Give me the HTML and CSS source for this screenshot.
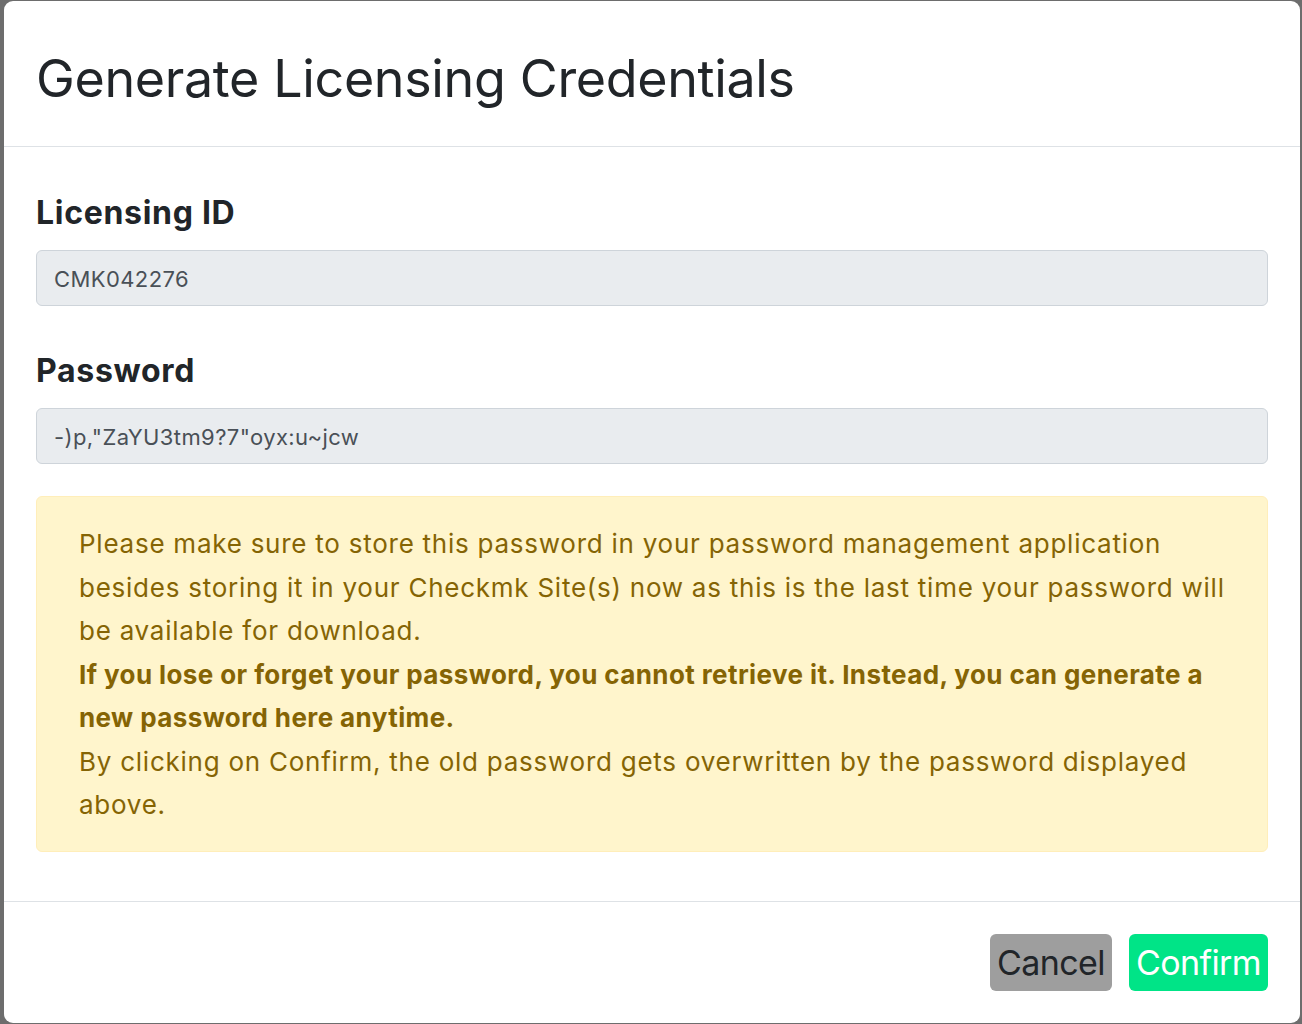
FILE: index.html
```html
<!DOCTYPE html>
<html lang="en">
<head>
<meta charset="utf-8">
<title>Generate Licensing Credentials</title>
<link rel="stylesheet" href="styles.css">
</head>
<body>
<div class="modal">
  <div class="modal-header">
    <h4 class="modal-title">Generate Licensing Credentials</h4>
  </div>
  <div class="modal-body">
    <div class="field first">
      <label class="field-label">Licensing ID</label>
      <input class="field-input" type="text" value="CMK042276" readonly>
    </div>
    <div class="field">
      <label class="field-label">Password</label>
      <input class="field-input" type="text" value="-)p,&quot;ZaYU3tm9?7&quot;oyx:u~jcw" readonly>
    </div>
    <div class="alert">
      Please make sure to store this password in your password management application<br>
      besides storing it in your Checkmk Site(s) now as this is the last time your password will<br>
      be available for download.<br>
      <strong>If you lose or forget your password, you cannot retrieve it. Instead, you can generate a<br>
      new password here anytime.</strong><br>
      By clicking on Confirm, the old password gets overwritten by the password displayed<br>
      above.
    </div>
  </div>
  <div class="modal-footer">
    <button class="btn btn-cancel" type="button">Cancel</button>
    <button class="btn btn-confirm" type="button">Confirm</button>
  </div>
</div>
</body>
</html>
```

FILE: styles.css
```css
html, body {
  margin: 0;
  padding: 0;
}
body {
  background: #6d6d6d;
  width: 1302px;
  height: 1024px;
  overflow: hidden;
  font-family: Inter, Roboto, "Liberation Sans", sans-serif;
  color: #212529;
}
.modal {
  margin: 1px 2px 0 4px;
  height: 1022px;
  background: #ffffff;
  border-radius: 9px;
  display: flex;
  flex-direction: column;
  box-sizing: border-box;
}
.modal-header {
  padding: 42px 32px 32px 32px;
  border-bottom: 1px solid #dee2e6;
  height: 146px;
  box-sizing: border-box;
  display: flex;
  align-items: center;
  flex-shrink: 0;
}
.modal-title {
  margin: 0;
  font-size: 52px;
  font-weight: 400;
  line-height: 64px;
  letter-spacing: -0.35px;
  color: #212529;
}
.modal-body {
  padding: 32px 32px 49px;
  display: flex;
  flex-direction: column;
}
.field {
  display: flex;
  flex-direction: column;
  margin-top: 45px;
}
.field.first {
  margin-top: 14px;
}
.field-label {
  font-size: 32px;
  font-weight: 700;
  line-height: 40px;
  letter-spacing: 0.7px;
  margin-bottom: 17px;
  color: #212529;
}
.field-input {
  height: 56px;
  box-sizing: border-box;
  border: 1px solid #ced4da;
  border-radius: 6px;
  background: #e9ecef;
  padding: 1px 17px 0;
  font-family: Inter, Roboto, "Liberation Sans", sans-serif;
  font-size: 22px;
  letter-spacing: 0.4px;
  color: #495057;
  outline: none;
}
.alert {
  margin-top: 32px;
  border: 1px solid #ffeeba;
  background: #fff5cc;
  border-radius: 6px;
  color: #856404;
  padding: 25px 20px 24.5px 42px;
  font-size: 26px;
  line-height: 43.5px;
  letter-spacing: 0.75px;
}
.alert strong {
  font-weight: 700;
  letter-spacing: 0.4px;
}
.modal-footer {
  border-top: 1px solid #dee2e6;
  padding: 32px;
  display: flex;
  justify-content: flex-end;
  gap: 17px;
}
.btn {
  border: none;
  border-radius: 6px;
  font-family: Inter, Roboto, "Liberation Sans", sans-serif;
  font-size: 34px;
  letter-spacing: -0.6px;
  line-height: 57px;
  height: 57px;
  padding: 0 7px;
  cursor: pointer;
}
.btn-cancel {
  background: #9e9e9e;
  color: #212529;
}
.btn-confirm {
  background: #00e487;
  color: #ffffff;
}
```
